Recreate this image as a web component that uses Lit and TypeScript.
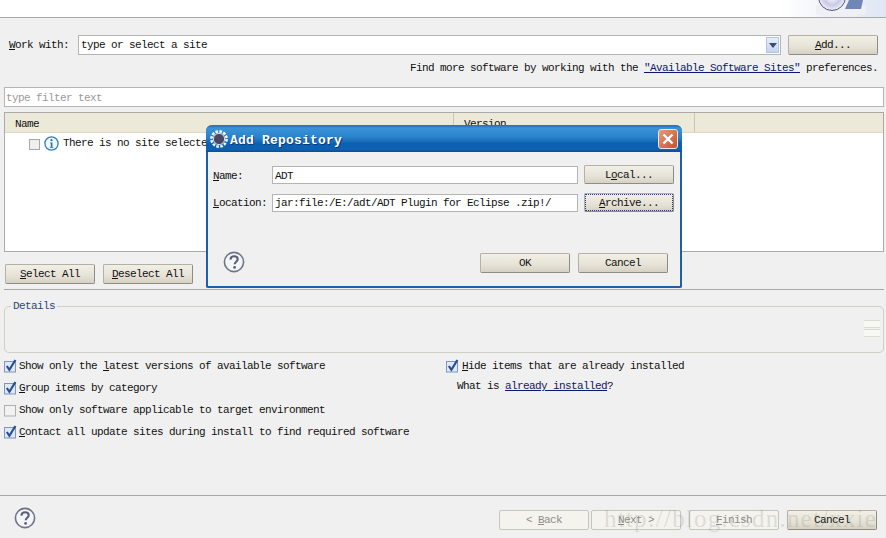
import { LitElement, html, css, svg } from "lit";
import { customElement } from "lit/decorators.js";

const helpIcon = (size: number) => html`<svg class="help" width=${size} height=${size} viewBox="0 0 22 22">
  <circle cx="11" cy="11" r="9.6" fill="#f4f5f8" stroke="#6f7488" stroke-width="1.6"/>
  <path d="M7.4 8.6c.2-2.2 1.7-3.3 3.7-3.3 2.1 0 3.6 1.2 3.6 3 0 2.4-3 2.6-3 5" fill="none" stroke="#5b6078" stroke-width="2.1"/>
  <circle cx="11.6" cy="16.4" r="1.4" fill="#5b6078"/>
</svg>`;

const check = (on: boolean) => html`<svg class="cb" width="14" height="14" viewBox="0 0 14 14">
  <rect x="0.5" y="2.5" width="11" height="10.5" fill=${on ? "#dfe8f6" : "#f2f2f2"} stroke=${on ? "#7e97c0" : "#b0b0b0"}/>
  ${on ? svg`<path d="M2.8 7l2.6 3.8L11.4 1" fill="none" stroke="#2a4f96" stroke-width="2.2"/>` : ""}
</svg>`;

const gear = html`<svg width="18" height="18" viewBox="0 0 18 18">
  <circle cx="9" cy="9" r="7.6" fill="none" stroke="#f2f4f8" stroke-width="2.6" stroke-dasharray="2.6 1.4"/>
  <circle cx="9" cy="9" r="5.6" fill="#47475f" stroke="#d8dbe6" stroke-width="1"/>
</svg>`;

@customElement("app-root")
export class AppRoot extends LitElement {
  static styles = css`
    :host {
      display: block;
      position: relative;
      width: 886px;
      height: 538px;
      overflow: hidden;
      background: #f0f0f0;
      color: #111;
      font: 11px/14px "Liberation Mono", monospace;
      letter-spacing: -0.6px;
    }
    u { text-underline-offset: 1px; }
    .banner {
      height: 17px;
      background: linear-gradient(90deg, #fff 88%, #dfe5f3 100%);
      border-bottom: 1px solid #a9a9a9;
      display: flex;
      justify-content: flex-end;
      align-items: flex-end;
      padding-right: 20px;
    }
    .page { display: flex; flex-direction: column; padding: 17px 2px 0 4px; }
    .work { display: flex; align-items: center; height: 20px; padding-left: 5px; }
    .work label { width: 69px; }
    .combo {
      width: 699px; height: 18px; box-sizing: content-box;
      background: #fff; border: 1px solid #b4b4b0;
      display: flex; align-items: center; justify-content: space-between;
      padding-left: 2px;
    }
    .arrow {
      width: 13px; height: 16px; margin-right: 1px;
      background: linear-gradient(#e6eefb, #c5d5f0);
      border: 1px solid #b3c4e2; box-sizing: border-box;
      display: flex; align-items: center; justify-content: center;
    }
    .arrow::after {
      content: ""; border: 4px solid transparent; border-top: 5px solid #3a4a70; border-bottom: 0;
    }
    .btn {
      box-sizing: border-box; width: 90px; height: 20px;
      display: flex; align-items: center; justify-content: center;
      background: linear-gradient(#f2efe6, #e6e2d6 60%, #d6d1c3);
      border: 1px solid #b4b0a4; border-right-color: #8f8c82; border-bottom-color: #8f8c82;
      border-radius: 2px;
    }
    .add { margin-left: 7px; }
    .find { height: 14px; margin-top: 6px; padding-right: 6px; text-align: right; }
    a { color: #0a1a6e; text-decoration: underline; }
    .filter {
      box-sizing: border-box; height: 20px; margin-top: 12px; width: 880px;
      background: #fff; border: 1px solid #b4b4b0; padding: 3px 1px 1px;
      color: #9a9a9a;
    }
    .table {
      box-sizing: border-box; width: 880px; height: 140px; margin-top: 5px;
      background: #fff; border: 1px solid #aaa;
    }
    .thead {
      height: 20px; background: #ece9d8; display: flex; box-sizing: border-box;
      border-bottom: 1px solid #dcd8c6;
    }
    .thead div { box-sizing: border-box; padding: 4px 0 0 10px; border-right: 1px solid #c8c5b4; }
    .c1 { width: 449px; }
    .c2 { width: 241px; }
    .row { display: flex; align-items: center; padding: 2px 0 0 24px; height: 16px; }
    .row .box { box-sizing: border-box; width: 11px; height: 11px; margin-top: 3px; border: 1px solid #a8a8a8; background: #efefef; }
    .info { margin: 0 4px 0 4px; }
    .buttons { display: flex; gap: 8px; margin: 12px 0 0 1px; }
    .sep { height: 1px; background: #a8a8a8; }
    .sep1 { margin-top: 5px; }
    .details {
      box-sizing: border-box; position: relative; width: 880px; height: 47px; margin-top: 16px;
      border: 1px solid #cfcfc4; border-radius: 5px; display: flex; justify-content: flex-end; align-items: center;
      padding: 0 3px 0 0;
    }
    .legend { position: absolute; left: 6px; top: -8px; padding: 0 2px; background: #f0f0f0; color: #27457c; }
    .spin { display: flex; flex-direction: column; gap: 1px; margin-top: -2px; }
    .spin i { display: block; width: 16px; height: 6px; background: #f7f7f4; border: 0 solid #dedbd0; border-width: 1px 0; }
    .opts { display: grid; grid-template-columns: 442px 1fr; margin-top: 6px; }
    .col { display: flex; flex-direction: column; }
    .opt { display: flex; align-items: center; height: 14px; margin-bottom: 8px; gap: 1px; white-space: pre; }
    .col.r .opt { gap: 2px; margin-bottom: 6px; }
    .what { padding-left: 11px; }
    .sep2 { margin: 48px -2px 0 -4px; }
    .footer { display: flex; align-items: center; height: 20px; margin-top: 14px; padding-left: 10px; }
    .footer .help { margin-top: -4px; }
    .footer .nav { margin-left: auto; display: flex; margin-right: 7px; }
    .nav .btn { margin-left: 2px; }
    .nav .gap { margin-left: 8px; }
    .dis { background: #f4f3ee; border-color: #c6c5bc; color: #8e8e86; }
    .dialog {
      position: absolute; left: 206px; top: 125px; width: 476px; height: 163px; box-sizing: border-box;
      border: 2px solid #1d5fa8; border-top: 0; border-radius: 6px 6px 2px 2px;
      background: #f0f0f0; display: flex; flex-direction: column;
    }
    .title {
      height: 27px; margin: 0 -2px; flex: none; border-radius: 6px 6px 0 0;
      background: linear-gradient(#1c6fb8 0, #3a93d6 12%, #2a83cb 45%, #0a5fb0 70%, #0f62b2 90%, #0a4c92 100%);
      display: flex; align-items: center; padding: 0 4px 0 4px; color: #fff;
      font-weight: bold; font-size: 13px; letter-spacing: 0.2px; text-shadow: 1px 1px 0 #0d3a72;
    }
    .title span { margin-left: 2px; padding-top: 5px; flex: 1; }
    .close {
      width: 20px; height: 20px; box-sizing: border-box; border: 1px solid #e8e8e8; border-radius: 3px;
      background: linear-gradient(135deg, #e89a7c, #c9502c);
      display: flex; align-items: center; justify-content: center;
    }
    .form { display: grid; grid-template-columns: 59px 306px 1fr; row-gap: 9px; padding: 13px 0 0 5px; align-items: center; }
    .field {
      box-sizing: border-box; height: 18px; background: #fff; border: 1px solid #b4b4b0;
      padding: 1px 2px; white-space: pre;
    }
    .low { padding-top: 2px; }
    .form .btn { margin-left: 6px; height: 19px; }
    .focus { outline: 1px dotted #1f3a78; outline-offset: -2px; }
    .dbottom { display: flex; align-items: center; padding: 0 12px 0 16px; margin-top: 41px; }
    .dbottom .help { margin-left: -1px; margin-top: -2px; }
    .dbottom .sp { flex: 1; }
    .dbottom .btn + .btn { margin-left: 8px; }
    .mark {
      position: absolute; left: 604px; top: 504px; font: 25px/30px "Liberation Serif", serif;
      letter-spacing: 1.2px; color: rgba(120,120,120,0.2); white-space: pre; pointer-events: none;
    }
  `;

  render() {
    return html`
      <div class="banner">
        <svg width="50" height="17" viewBox="0 0 50 17">
          <defs><radialGradient id="cd"><stop offset="0" stop-color="#fff"/><stop offset=".6" stop-color="#c9c9e6"/><stop offset="1" stop-color="#eef0f8"/></radialGradient></defs>
          <ellipse cx="24" cy="10" rx="30" ry="7" fill="#eef0f6"/>
          <circle cx="16" cy="-3" r="13.5" fill="url(#cd)" stroke="#565868" stroke-width="1"/>
          <path d="M29 9 L33 0 H47 L45 9 Z" fill="#6f86b6"/>
        </svg>
      </div>
      <div class="page">
        <div class="work">
          <label><u>W</u>ork with:</label>
          <div class="combo"><span>type or select a site</span><div class="arrow"></div></div>
          <div class="btn add"><span><u>A</u>dd...</span></div>
        </div>
        <div class="find">Find more software by working with the <a>"Available Software Sites"</a> preferences.</div>
        <div class="filter">type filter text</div>
        <div class="table">
          <div class="thead"><div class="c1">Name</div><div class="c2">Version</div></div>
          <div class="row">
            <span class="box"></span>
            <svg class="info" width="15" height="15" viewBox="0 0 15 15">
              <circle cx="7.5" cy="7.5" r="6.6" fill="#f2f8fd" stroke="#2f7fb8" stroke-width="1.3"/>
              <circle cx="7.5" cy="4.2" r="1.1" fill="#1f6ea8"/>
              <path d="M6 6.5h2.4v4.4h1v.8H5.8v-.8h1V7.3H6z" fill="#1f6ea8"/>
            </svg>
            <span>There is no site selected.</span>
          </div>
        </div>
        <div class="buttons">
          <div class="btn"><span><u>S</u>elect All</span></div>
          <div class="btn"><span><u>D</u>eselect All</span></div>
        </div>
        <div class="sep sep1"></div>
        <div class="details">
          <span class="legend">Details</span>
          <div class="spin"><i></i><i></i></div>
        </div>
        <div class="opts">
          <div class="col">
            <div class="opt">${check(true)}<span>Show only the <u>l</u>atest versions of available software</span></div>
            <div class="opt">${check(true)}<span><u>G</u>roup items by category</span></div>
            <div class="opt">${check(false)}<span>Show only software applicable to target environment</span></div>
            <div class="opt">${check(true)}<span><u>C</u>ontact all update sites during install to find required software</span></div>
          </div>
          <div class="col r">
            <div class="opt">${check(true)}<span><u>H</u>ide items that are already installed</span></div>
            <div class="opt what"><span>What is <a>already installed</a>?</span></div>
          </div>
        </div>
        <div class="sep sep2"></div>
        <div class="footer">
          ${helpIcon(22)}
          <div class="nav">
            <div class="btn dis"><span>&lt; <u>B</u>ack</span></div>
            <div class="btn dis"><span><u>N</u>ext &gt;</span></div>
            <div class="btn dis gap"><span><u>F</u>inish</span></div>
            <div class="btn gap"><span>Cancel</span></div>
          </div>
        </div>
      </div>
      <div class="dialog">
        <div class="title">${gear}<span>Add Repository</span>
          <div class="close"><svg width="12" height="12" viewBox="0 0 12 12"><path d="M1.5 1.5l9 9M10.5 1.5l-9 9" stroke="#fff" stroke-width="2.4"/></svg></div>
        </div>
        <div class="form">
          <label class="low"><u>N</u>ame:</label>
          <div class="field low">ADT</div>
          <div class="btn"><span>L<u>o</u>cal...</span></div>
          <label><u>L</u>ocation:</label>
          <div class="field">jar:file:/E:/adt/ADT Plugin for Eclipse .zip!/</div>
          <div class="btn focus"><span><u>A</u>rchive...</span></div>
        </div>
        <div class="dbottom">
          ${helpIcon(22)}
          <div class="sp"></div>
          <div class="btn"><span>OK</span></div>
          <div class="btn"><span>Cancel</span></div>
        </div>
      </div>
      <div class="mark">http://blog.csdn.net/xxie</div>
    `;
  }
}
